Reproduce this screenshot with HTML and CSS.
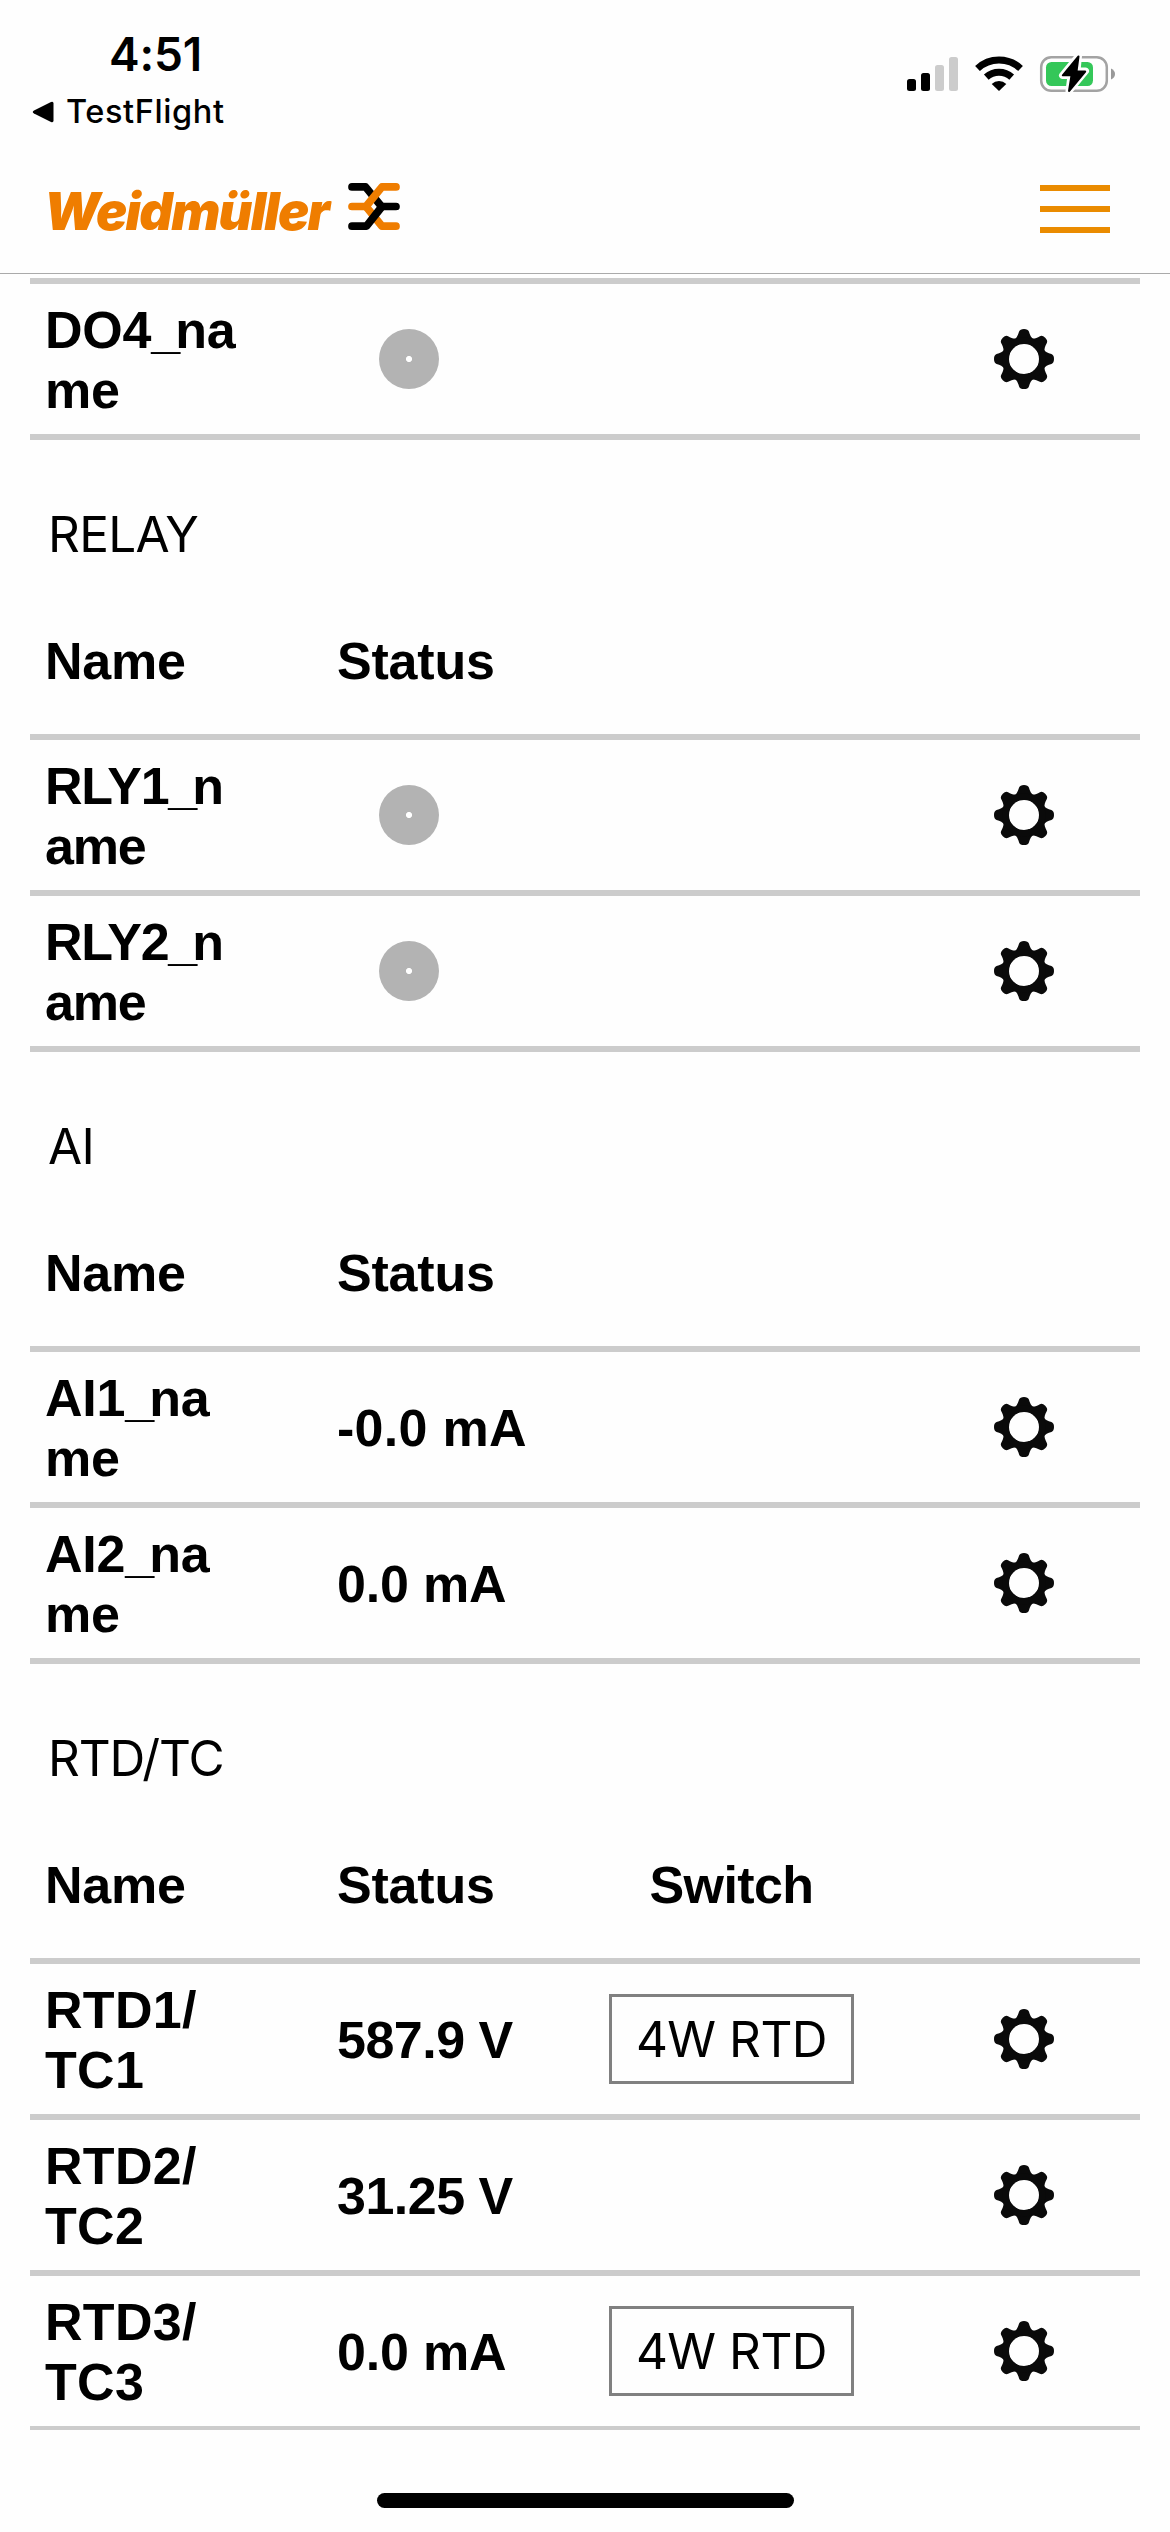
FILE: index.html
```html
<!DOCTYPE html>
<html lang="en">
<head>
<meta charset="utf-8">
<title>Weidmüller I/O</title>
<link rel="stylesheet" href="styles.css">
</head>
<body>
<svg class="defs" width="0" height="0" aria-hidden="true">
  <defs>
    <path id="tooth" d="M-10-19.500C-7-21-6-24-4.900-27.400Q-4-30 0-30Q4-30 4.900-27.400C6-24 7-21 10-19.500L6-14H-6Z"/>
    <symbol id="gear" viewBox="-30 -30 60 60">
      <g fill="#0a0a0a">
        <use href="#tooth"/><use href="#tooth" transform="rotate(45)"/><use href="#tooth" transform="rotate(90)"/><use href="#tooth" transform="rotate(135)"/>
        <use href="#tooth" transform="rotate(180)"/><use href="#tooth" transform="rotate(225)"/><use href="#tooth" transform="rotate(270)"/><use href="#tooth" transform="rotate(315)"/>
      </g>
      <circle r="18.200" fill="none" stroke="#0a0a0a" stroke-width="6.600"/>
      <circle r="15" fill="#fefefe"/>
    </symbol>
  </defs>
</svg>
<div class="screen">
  <header class="top">
    <div class="statusbar">
      <div class="clock-area">
        <div class="clock">4:51</div>
        <div class="back">
          <svg width="22" height="22" viewBox="0 0 22 22"><path d="M2 9.5L19 1Q21.500 0 21.500 2.500V19.500Q21.500 22 19 21L2 12.500Q-0.500 11 2 9.500Z"/></svg>
          <span>TestFlight</span>
        </div>
      </div>
      <svg class="indicators" width="210" height="40" viewBox="906 54 210 40">
        <rect x="907" y="79" width="9" height="12" rx="2.500"/>
        <rect x="921" y="73" width="9" height="18" rx="2.500"/>
        <rect x="935" y="65" width="9" height="26" rx="2.500" fill="#ccc"/>
        <rect x="949" y="57" width="9" height="34" rx="2.500" fill="#ccc"/>
        <path d="M977.500 68.500A31.500 31.500 0 0 1 1020.500 68.500" fill="none" stroke="#000" stroke-width="7"/>
        <path d="M986.300 77.200A19 19 0 0 1 1011.700 77.200" fill="none" stroke="#000" stroke-width="7"/>
        <path d="M999 91L991.700 84A10.500 10.500 0 0 1 1006.300 84Z"/>
        <rect x="1041.200" y="57.200" width="65.600" height="33.600" rx="10" fill="none" stroke="#a3a3a3" stroke-width="2.500"/>
        <rect x="1046" y="62" width="47" height="24" rx="5.500" fill="#34c759"/>
        <path d="M1111 68.500Q1115 70.500 1115 74T1111 79.500Z" fill="#999"/>
        <path d="M1078.500 56L1062.500 75.500H1071L1069 91L1085.500 71H1077Z" stroke="#fefefe" stroke-width="7" stroke-linejoin="round"/>
        <path d="M1078.500 56.500L1062.800 75.300H1071.500L1069 91L1085.200 71.500H1076.500Z" stroke="#000" stroke-width="2" stroke-linejoin="round"/>
      </svg>
    </div>
    <div class="appbar">
      <div class="brand">
        <span class="wordmark">Weidmüller</span>
        <svg width="52" height="48" viewBox="348 183 52 48" fill="none" stroke-width="7.700" stroke-linecap="round" stroke-linejoin="round">
          <path d="M352 186.900H365.500L381.500 206.500H396" stroke="#000"/>
          <path d="M366 206.500L382 226.200H396" stroke="#ef7d00"/>
          <path d="M396 186.900H382L366 206.500H352" stroke="#ef7d00"/>
          <path d="M352 226.200H366.500L382 206.500" stroke="#000"/>
        </svg>
      </div>
      <div class="menu"><i></i><i></i><i></i></div>
    </div>
  </header>

  <main class="list">
    <div class="row"><div class="name">DO4<u>_</u>na<br>me</div><div class="dot"></div><svg class="gear"><use href="#gear"/></svg></div>

    <h2>RELAY</h2>
    <div class="row head"><div>Name</div><div>Status</div></div>
    <div class="row"><div class="name tight">RLY1<u>_</u>n<br>ame</div><div class="dot"></div><svg class="gear"><use href="#gear"/></svg></div>
    <div class="row"><div class="name tight">RLY2<u>_</u>n<br>ame</div><div class="dot"></div><svg class="gear"><use href="#gear"/></svg></div>

    <h2>AI</h2>
    <div class="row head"><div>Name</div><div>Status</div></div>
    <div class="row"><div class="name">AI1<u>_</u>na<br>me</div><div class="value minus">-0.0 mA</div><svg class="gear"><use href="#gear"/></svg></div>
    <div class="row"><div class="name">AI2<u>_</u>na<br>me</div><div class="value">0.0 mA</div><svg class="gear"><use href="#gear"/></svg></div>

    <h2 class="rtd">RTD/TC</h2>
    <div class="row head"><div>Name</div><div>Status</div><div class="center">Switch</div></div>
    <div class="row"><div class="name wide">RTD1/<br>TC1</div><div class="value volts">587.9 V</div><div class="switch">4W RTD</div><svg class="gear"><use href="#gear"/></svg></div>
    <div class="row"><div class="name wide">RTD2/<br>TC2</div><div class="value volts">31.25 V</div><svg class="gear"><use href="#gear"/></svg></div>
    <div class="row last"><div class="name wide">RTD3/<br>TC3</div><div class="value">0.0 mA</div><div class="switch">4W RTD</div><svg class="gear"><use href="#gear"/></svg></div>
  </main>
  <footer><div class="home"></div></footer>
</div>
</body>
</html>
```
FILE: styles.css
```css
* { box-sizing: border-box; }
body { margin: 0; background: #fefefe; color: #000; }
.defs { position: absolute; }
svg { display: block; flex: none; }

.screen {
  width: 1170px;
  height: 2532px;
  display: flex;
  flex-direction: column;
  overflow: hidden;
  font-family: "Liberation Sans", Arial, sans-serif;
}

.top { height: 274px; border-bottom: 1px solid #aaa; }
.statusbar {
  height: 141px;
  display: flex;
  justify-content: space-between;
  padding: 27px 54px 0 32px;
  font-family: Inter, sans-serif;
}
.clock { padding-left: 77px; font-size: 46px; line-height: 55px; font-weight: 600; letter-spacing: -0.2px; }
.back { display: flex; align-items: center; gap: 12px; margin-top: 10px; font-size: 32.5px; line-height: 40px; font-weight: 500; letter-spacing: 0.6px; }
.indicators { margin-top: 27px; }

.appbar { height: 132px; display: flex; justify-content: space-between; padding: 42px 60px 0 44px; }
.brand { display: flex; gap: 16px; height: 48px; }
.wordmark {
  width: 288px;
  padding-top: 5px;
  font: italic 900 52px/48px Inter, sans-serif;
  letter-spacing: -1.7px;
  color: #ef7d00;
  white-space: nowrap;
}
.menu { display: flex; flex-direction: column; gap: 15px; padding-top: 2px; }
.menu i { width: 70px; height: 6px; background: #ea8b00; }

.list { height: 2156px; padding: 4px 30px 0; overflow: hidden; }
.row {
  height: 156px;
  display: grid;
  grid-template-columns: 292px 272px 245px 60px;
  align-items: center;
  padding-left: 15px;
  border-top: 6px solid #ccc;
  font-size: 52px;
  line-height: 60px;
  font-weight: 700;
  letter-spacing: -0.2px;
}
.row.head { height: 144px; border-top: 0; padding-bottom: 3px; }
.row.last { height: 162px; border-bottom: 6px solid #ccc; }
.name, .value { padding-top: 2px; }
.name.tight { letter-spacing: -1.2px; }
.name.wide { letter-spacing: 0.3px; }
.value.volts { letter-spacing: -0.5px; }
.value.minus { letter-spacing: 0.3px; }
.name u { text-decoration: none; letter-spacing: -5px; }
.center { text-align: center; letter-spacing: -0.6px; }
.dot {
  width: 60px;
  height: 60px;
  margin-left: 42px;
  border-radius: 50%;
  background: radial-gradient(circle, #fff 2.7px, #b3b3b3 3.4px);
}
.gear { width: 60px; height: 60px; grid-column: 4; margin-left: 140px; }
.switch {
  height: 90px;
  border: 3px solid #808080;
  text-align: center;
  font: 400 49.5px/84px Inter, sans-serif;
  letter-spacing: -0.5px;
}
h2 {
  height: 156px;
  margin: 0;
  padding: 64px 0 0 18px;
  border-top: 6px solid #ccc;
  font: 400 49.5px/60px Inter, sans-serif;
  letter-spacing: -0.7px;
}
h2.rtd { letter-spacing: -1.1px; }
footer { height: 102px; padding-top: 63px; }
.home { width: 417px; height: 15px; margin: 0 auto; border-radius: 8px; background: #000; }
```
